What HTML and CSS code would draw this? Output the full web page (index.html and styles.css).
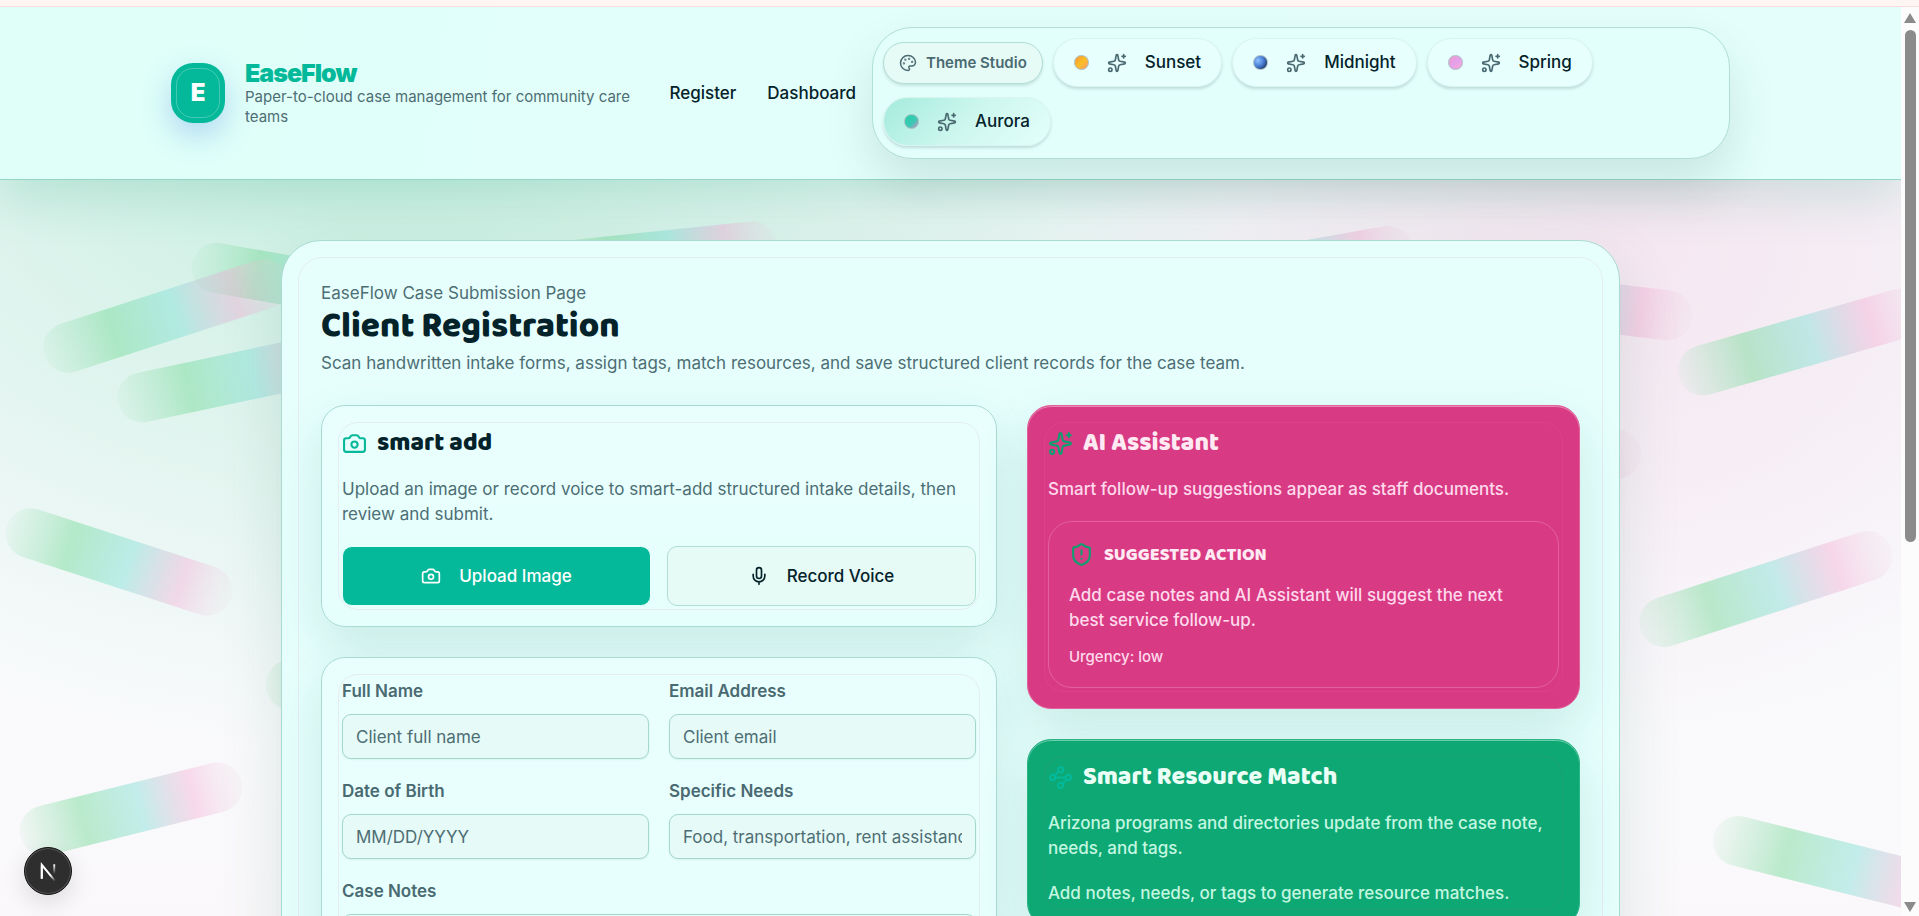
FILE: index.html
```html
<!DOCTYPE html>
<html lang="en">
<head>
    <meta charset="utf-8">
    <meta name="viewport" content="width=device-width, initial-scale=1">
    <title>EaseFlow - Client Registration</title>
    <link rel="stylesheet" href="styles.css">
</head>
<body>
<!-- shared icons -->
<svg class="sprite" aria-hidden="true">
    <symbol id="i-sparkles" viewBox="0 0 24 24">
        <path d="M11.017 2.814a1 1 0 0 1 1.966 0l1.051 5.558a2 2 0 0 0 1.594 1.594l5.558 1.051a1 1 0 0 1 0 1.966l-5.558 1.051a2 2 0 0 0-1.594 1.594l-1.051 5.558a1 1 0 0 1-1.966 0l-1.051-5.558a2 2 0 0 0-1.594-1.594l-5.558-1.051a1 1 0 0 1 0-1.966l5.558-1.051a2 2 0 0 0 1.594-1.594z"/>
        <path d="M20 2v4M22 4h-4"/>
        <circle cx="4" cy="20" r="2"/>
    </symbol>
    <symbol id="i-palette" viewBox="0 0 24 24">
        <path d="M12 22a1 1 0 0 1 0-20 10 9 0 0 1 10 9 5 5 0 0 1-5 5h-2.25a1.75 1.75 0 0 0-1.4 2.8l.3.4a1.75 1.75 0 0 1-1.4 2.8z"/>
        <circle cx="13.5" cy="6.5" r=".5"/>
        <circle cx="17.5" cy="10.5" r=".5"/>
        <circle cx="6.5" cy="12.5" r=".5"/>
        <circle cx="8.5" cy="7.5" r=".5"/>
    </symbol>
    <symbol id="i-camera" viewBox="0 0 24 24">
        <path d="M13.997 4a2 2 0 0 1 1.76 1.05l.486.9A2 2 0 0 0 18.003 7H20a2 2 0 0 1 2 2v9a2 2 0 0 1-2 2H4a2 2 0 0 1-2-2V9a2 2 0 0 1 2-2h1.997a2 2 0 0 0 1.759-1.048l.489-.904A2 2 0 0 1 10.004 4z"/>
        <circle cx="12" cy="13" r="3"/>
    </symbol>
    <symbol id="i-mic" viewBox="0 0 24 24">
        <path d="M12 19v3M19 10v2a7 7 0 0 1-14 0v-2"/>
        <rect x="9" y="2" width="6" height="13" rx="3"/>
    </symbol>
    <symbol id="i-shield" viewBox="0 0 24 24">
        <path d="M20 13c0 5-3.5 7.5-7.66 8.95a1 1 0 0 1-.67-.01C7.5 20.5 4 18 4 13V6a1 1 0 0 1 1-1c2 0 4.5-1.2 6.24-2.72a1.17 1.17 0 0 1 1.52 0C14.51 3.81 17 5 19 5a1 1 0 0 1 1 1z"/>
        <path d="M12 8v4M12 16h.01"/>
    </symbol>
    <symbol id="i-waypoints" viewBox="0 0 24 24">
        <circle cx="12" cy="4.5" r="2.5"/>
        <circle cx="4.5" cy="12" r="2.5"/>
        <circle cx="19.5" cy="12" r="2.5"/>
        <circle cx="12" cy="19.5" r="2.5"/>
        <path d="m10.2 6.3-3.9 3.9M7 12h10M13.8 17.7l3.9-3.9"/>
    </symbol>
</svg>

<div class="topline"></div>
<div class="window">
    <div class="page">
        <!-- aurora streaks behind the card -->
        <svg class="streaks" aria-hidden="true">
            <defs>
                <linearGradient id="aurora">
                    <stop offset="0" stop-color="#8fdcae" stop-opacity="0.08"/>
                    <stop offset="0.28" stop-color="#7fdc9f" stop-opacity="0.52"/>
                    <stop offset="0.54" stop-color="#86e0d8" stop-opacity="0.48"/>
                    <stop offset="0.78" stop-color="#f5a9d3" stop-opacity="0.4"/>
                    <stop offset="1" stop-color="#e8d5e0" stop-opacity="0.12"/>
                </linearGradient>
            </defs>
            <g fill="url(#aurora)">
                <rect x="-118" y="-25" width="236" height="50" rx="25" transform="translate(308 277) rotate(10)"/>
                <rect x="-128" y="-25" width="256" height="50" rx="25" transform="translate(166 309) rotate(-18)"/>
                <rect x="-128" y="-25" width="256" height="50" rx="25" transform="translate(243 369) rotate(-12)"/>
                <rect x="-118" y="-25" width="236" height="50" rx="25" transform="translate(660 249) rotate(-6)"/>
                <rect x="-118" y="-25" width="236" height="50" rx="25" transform="translate(1297 260) rotate(-10)"/>
                <rect x="-118" y="-25" width="236" height="50" rx="25" transform="translate(1575 297) rotate(7)"/>
                <rect x="-128" y="-25" width="256" height="50" rx="25" transform="translate(1802 335) rotate(-16)"/>
                <rect x="-118" y="-25" width="236" height="50" rx="25" transform="translate(1524 460) rotate(-8)"/>
                <rect x="-118" y="-25" width="236" height="50" rx="25" transform="translate(119 555) rotate(18)"/>
                <rect x="-132" y="-25" width="264" height="50" rx="25" transform="translate(1766 582) rotate(-18)"/>
                <rect x="-118" y="-25" width="236" height="50" rx="25" transform="translate(383 668) rotate(-6)"/>
                <rect x="-114" y="-25" width="228" height="50" rx="25" transform="translate(131 802) rotate(-14)"/>
                <rect x="-132" y="-25" width="264" height="50" rx="25" transform="translate(1842 860) rotate(14)"/>
            </g>
        </svg>

        <header class="header">
            <div class="header-inner">
                <div class="brand">
                    <div class="logo">E</div>
                    <div class="brand-text">
                        <strong>EaseFlow</strong>
                        <span>Paper-to-cloud case management for community care teams</span>
                    </div>
                </div>
                <nav class="nav">
                    <a href="#register">Register</a>
                    <a href="#dashboard">Dashboard</a>
                </nav>
                <div class="themes">
                    <span class="studio"><svg class="icon"><use href="#i-palette"/></svg>Theme Studio</span>
                    <button type="button" class="theme"><i class="dot sunset"></i><svg class="icon"><use href="#i-sparkles"/></svg>Sunset</button>
                    <button type="button" class="theme"><i class="dot midnight"></i><svg class="icon"><use href="#i-sparkles"/></svg>Midnight</button>
                    <button type="button" class="theme"><i class="dot spring"></i><svg class="icon"><use href="#i-sparkles"/></svg>Spring</button>
                    <button type="button" class="theme active"><i class="dot aurora"></i><svg class="icon"><use href="#i-sparkles"/></svg>Aurora</button>
                </div>
            </div>
        </header>

        <main class="shell" id="register">
            <p class="eyebrow">EaseFlow Case Submission Page</p>
            <h1>Client Registration</h1>
            <p class="lead">Scan handwritten intake forms, assign tags, match resources, and save structured client records for the case team.</p>

            <div class="columns">
                <div class="column">
                    <section class="card">
                        <h2><svg class="icon"><use href="#i-camera"/></svg>smart add</h2>
                        <p>Upload an image or record voice to smart-add structured intake details, then review and submit.</p>
                        <div class="actions">
                            <button type="button" class="btn primary"><svg class="icon"><use href="#i-camera"/></svg>Upload Image</button>
                            <button type="button" class="btn"><svg class="icon"><use href="#i-mic"/></svg>Record Voice</button>
                        </div>
                    </section>

                    <form class="card form">
                        <div class="field">
                            <label for="name">Full Name</label>
                            <input id="name" type="text" placeholder="Client full name">
                        </div>
                        <div class="field">
                            <label for="email">Email Address</label>
                            <input id="email" type="email" placeholder="Client email">
                        </div>
                        <div class="field">
                            <label for="dob">Date of Birth</label>
                            <input id="dob" type="text" placeholder="MM/DD/YYYY">
                        </div>
                        <div class="field">
                            <label for="needs">Specific Needs</label>
                            <input id="needs" type="text" placeholder="Food, transportation, rent assistance">
                        </div>
                        <div class="field wide">
                            <label for="notes">Case Notes</label>
                            <textarea id="notes" rows="5"></textarea>
                        </div>
                    </form>
                </div>

                <div class="column">
                    <section class="card pink">
                        <h2><svg class="icon"><use href="#i-sparkles"/></svg>AI Assistant</h2>
                        <p>Smart follow-up suggestions appear as staff documents.</p>
                        <div class="suggestion">
                            <h3><svg class="icon"><use href="#i-shield"/></svg>Suggested Action</h3>
                            <p>Add case notes and AI Assistant will suggest the next best service follow-up.</p>
                            <small>Urgency: low</small>
                        </div>
                    </section>

                    <section class="card green">
                        <h2><svg class="icon"><use href="#i-waypoints"/></svg>Smart Resource Match</h2>
                        <p>Arizona programs and directories update from the case note, needs, and tags.</p>
                        <p>Add notes, needs, or tags to generate resource matches.</p>
                    </section>
                </div>
            </div>
        </main>
    </div>

    <div class="scrollbar" aria-hidden="true">
        <i class="arrow up"></i>
        <i class="thumb"></i>
        <i class="arrow down"></i>
    </div>
</div>

<button type="button" class="devtools" aria-label="Open dev tools">
    <svg viewBox="0 0 48 48" fill="none" stroke-width="2">
        <defs>
            <linearGradient id="n1" x1="24" y1="24" x2="32" y2="34" gradientUnits="userSpaceOnUse">
                <stop offset="0.4" stop-color="#fff"/>
                <stop offset="1" stop-color="#fff" stop-opacity="0"/>
            </linearGradient>
            <linearGradient id="n2" x1="31" y1="17" x2="31" y2="27" gradientUnits="userSpaceOnUse">
                <stop offset="0" stop-color="#fff"/>
                <stop offset="1" stop-color="#fff" stop-opacity="0"/>
            </linearGradient>
        </defs>
        <path d="M17.500 32V17.500L31.500 34.500" stroke="url(#n1)"/>
        <path d="M17.500 32V18" stroke="#fff"/>
        <path d="M30.500 17v11" stroke="url(#n2)"/>
    </svg>
</button>
</body>
</html>
```
FILE: styles.css
```css
* {
    box-sizing: border-box;
}
body {
    margin: 0;
    height: 100vh;
    overflow: hidden;
    display: flex;
    flex-direction: column;
    background: #fcfcfc;
    color: #04222a;
    font: 17px/25px Inter, "Liberation Sans", sans-serif;
}
h1, h2, h3, p {
    margin: 0;
}
button, input, textarea {
    font: inherit;
    color: inherit;
}
.sprite {
    display: none;
}
.icon {
    width: 20px;
    height: 20px;
    flex: none;
    fill: none;
    stroke: currentColor;
    stroke-width: 2;
    stroke-linecap: round;
    stroke-linejoin: round;
}
.topline {
    flex: none;
    height: 7px;
    background: #fff6f4;
    border-bottom: 1px solid #fadcdd;
}
.window {
    flex: 1;
    min-height: 0;
    display: flex;
}
.page {
    position: relative;
    flex: 1;
    min-width: 0;
    overflow: hidden;
    background:
        radial-gradient(ellipse 46% 72% at 20% 10%, rgba(150, 228, 196, 0.5), rgba(150, 228, 196, 0.25) 50%, transparent),
        radial-gradient(ellipse 30% 56% at 85% 26%, rgba(244, 200, 224, 0.38), rgba(244, 200, 224, 0.24) 45%, transparent),
        linear-gradient(#f3f8fa, #f9fafc 70%, #faf8fa);
}
.streaks {
    position: absolute;
    inset: 0;
    width: 100%;
    height: 100%;
}

/* header */
.header {
    position: relative;
    padding: 20px 32px;
    background: linear-gradient(100deg, #dffff8, #e3fffb 40%, #e4fffb);
    border-bottom: 1px solid #93d6c4;
    box-shadow: 0 16px 48px rgba(20, 150, 110, 0.18);
}
.header-inner {
    max-width: 1559px;
    margin: 0 auto;
    display: flex;
    align-items: center;
}
.brand {
    flex: 1;
    min-width: 0;
    display: flex;
    align-items: center;
    gap: 20px;
    padding-right: 26px;
}
.logo {
    position: relative;
    flex: none;
    width: 54px;
    height: 60px;
    border-radius: 22px;
    background: #04b999;
    color: #fff;
    font-size: 24px;
    font-weight: 900;
    line-height: 60px;
    text-align: center;
    box-shadow: 0 12px 30px rgba(70, 130, 230, 0.32);
}
.logo::after {
    content: "";
    position: absolute;
    inset: 5px;
    border: 1px solid rgba(255, 255, 255, 0.25);
    border-radius: 17px;
}
.brand-text strong {
    display: block;
    color: #04b999;
    font-size: 25px;
    font-weight: 900;
    line-height: 28px;
    letter-spacing: -1px;
}
.brand-text span {
    display: block;
    color: #4d6e74;
    font-size: 15px;
    line-height: 20px;
}
.nav {
    display: flex;
    gap: 31px;
    padding-right: 16px;
}
.nav a {
    color: inherit;
    font-weight: 500;
    text-decoration: none;
}
.themes {
    flex: 0 1 858px;
    display: flex;
    flex-wrap: wrap;
    align-items: center;
    gap: 10px;
    padding: 10px 10px 12px;
    border: 1px solid #b0dfd5;
    border-radius: 40px;
    background: #e3fffc;
    box-shadow: 0 24px 48px rgba(20, 60, 60, 0.13);
}
.studio {
    display: flex;
    align-items: center;
    gap: 9px;
    height: 42px;
    padding: 0 15px;
    border: 1px solid #b0dfd5;
    border-radius: 21px;
    background: #e6faf6;
    color: #4a6a72;
    font-size: 15px;
    font-weight: 600;
    box-shadow: 0 2px 3px rgba(20, 60, 60, 0.14);
}
.studio .icon {
    width: 18px;
    height: 18px;
}
.theme {
    display: flex;
    align-items: center;
    gap: 18px;
    height: 49px;
    padding: 0 20px;
    border: 1px solid #d9f5f0;
    border-radius: 25px;
    background: #e7fffd;
    font-weight: 500;
    box-shadow: 0 2px 3px rgba(20, 60, 60, 0.18);
}
.theme .icon {
    color: #4a6a72;
}
.theme.active {
    background: linear-gradient(135deg, #a4ebdd, #cdf7ee 50%, #e4fffb);
}
.dot {
    width: 15px;
    height: 15px;
    border: 1px solid #a9bcc4;
    border-radius: 50%;
}
.sunset {
    background: linear-gradient(135deg, #fb923c, #fbbf24 50%, #fb9a6b);
}
.midnight {
    background: radial-gradient(circle at 30% 35%, #8fc1ff, #4a7fd6 45%, #0f1d3d 95%);
}
.spring {
    background: linear-gradient(135deg, #f49ac9, #e3a1ec 50%, #f9a8d4);
}
.aurora {
    background: linear-gradient(135deg, #25d0a8, #3cc8b4 60%, #d98fc4);
}

/* main card */
.shell {
    position: relative;
    max-width: 1339px;
    margin: 60px auto 0;
    padding: 40px 39px;
    border: 1px solid #a9dbd1;
    border-radius: 40px;
    background: #e6fffd;
    box-shadow: 0 24px 64px rgba(20, 100, 80, 0.13);
}
.shell::before, .card::before {
    content: "";
    position: absolute;
    inset: 16px;
    border: 1px solid #e6edf0;
    border-radius: 24px;
    pointer-events: none;
}
.eyebrow, .lead {
    color: #4d6e74;
}
h1, h2, h3 {
    font-family: "Baloo 2", Lato, sans-serif;
    font-weight: 800;
}
h1 {
    font-size: 35px;
    line-height: 40px;
}
.lead {
    margin-top: 5px;
}
.columns {
    display: grid;
    grid-template-columns: 11fr 9fr;
    gap: 30px;
    margin-top: 29px;
}
.column {
    display: flex;
    flex-direction: column;
    gap: 30px;
}
.card {
    position: relative;
    padding: 21px 20px 20px;
    border: 1px solid #a9dbd1;
    border-radius: 24px;
    background: linear-gradient(#e9fffe, #e5fffc);
    box-shadow: 0 20px 50px rgba(20, 110, 90, 0.14);
}
.card::before {
    border-radius: 20px;
}
.card > * {
    position: relative;
}
.card h2 {
    display: flex;
    align-items: center;
    gap: 10px;
    font-size: 25px;
    line-height: 32px;
}
.card h2 .icon, .suggestion .icon {
    width: 25px;
    height: 25px;
    color: #04b999;
}
.card > p {
    margin-top: 18px;
    color: #4d6e74;
}
.actions {
    display: grid;
    grid-template-columns: 1fr 1fr;
    gap: 16px;
    margin-top: 19px;
}
.btn {
    display: flex;
    align-items: center;
    justify-content: center;
    gap: 18px;
    height: 60px;
    border: 1px solid #b0dfd5;
    border-radius: 10px;
    background: #e6faf6;
    font-weight: 500;
}
.btn.primary {
    border-color: #e6fffc;
    background: #04b999;
    color: #fff;
}
.form {
    display: grid;
    grid-template-columns: 1fr 1fr;
    gap: 20px;
}
.field {
    display: flex;
    flex-direction: column;
    gap: 10px;
    min-width: 0;
}
.field.wide {
    grid-column: 1 / -1;
}
.field label {
    color: #4a6a72;
    font-weight: 600;
}
.field input, .field textarea {
    width: 100%;
    height: 45px;
    padding: 0 13px;
    border: 1px solid #a3d8ca;
    border-radius: 9px;
    background: #e6faf7;
    box-shadow: 0 1px 2px rgba(20, 90, 80, 0.08);
}
.field textarea {
    height: 140px;
    padding: 10px 13px;
    resize: none;
}
.field ::placeholder {
    color: #4d6e74;
    opacity: 1;
}
.pink, .green {
    color: #ffeaf4;
    box-shadow: 0 20px 50px rgba(20, 110, 90, 0.14), inset 0 1px 0 rgba(255, 255, 255, 0.4);
}
.pink {
    border-color: #e2609c;
    background: #d83b83;
}
.pink::before {
    border-color: #dc4389;
}
.pink h2 .icon, .suggestion .icon {
    color: #0d9f70;
}
.card.pink p, .pink small {
    color: #ffd9ec;
    font-weight: 500;
}
.suggestion {
    margin-top: 19px;
    padding: 20px;
    border: 1px solid #e2609c;
    border-radius: 24px;
}
.suggestion h3 {
    display: flex;
    align-items: center;
    gap: 10px;
    font-size: 18px;
    line-height: 24px;
    text-transform: uppercase;
}
.suggestion p {
    margin-top: 16px;
}
.suggestion small {
    display: block;
    margin-top: 14px;
    font-size: 15px;
    line-height: 20px;
}
.green {
    border-color: #2bb585;
    background: #0ea875;
    color: #eafff5;
}
.green::before {
    border-color: #1c9f74;
}
.card.green p {
    color: #c4f7e0;
    font-weight: 500;
}
.green p + p {
    margin-top: 20px;
}

/* scrollbar */
.scrollbar {
    flex: none;
    width: 18px;
    padding: 6px 0 4px;
    display: flex;
    flex-direction: column;
    align-items: center;
    gap: 7px;
    background: #fcfcfc;
}
.arrow {
    border: 6px solid transparent;
}
.arrow.up {
    border-top: 0;
    border-bottom: 10px solid #8b8b8b;
}
.arrow.down {
    margin-top: auto;
    border-bottom: 0;
    border-top: 10px solid #8b8b8b;
}
.thumb {
    width: 11px;
    height: 57%;
    border-radius: 6px;
    background: #8b8b8b;
}
.devtools {
    position: fixed;
    left: 24px;
    bottom: 21px;
    width: 48px;
    height: 48px;
    padding: 0;
    border: 1px solid #111;
    border-radius: 50%;
    background: #2e2e2e;
    box-shadow: inset 0 0 0 1px #555, 0 8px 24px rgba(0, 0, 0, 0.12);
}
.devtools svg {
    display: block;
    width: 100%;
}
```
